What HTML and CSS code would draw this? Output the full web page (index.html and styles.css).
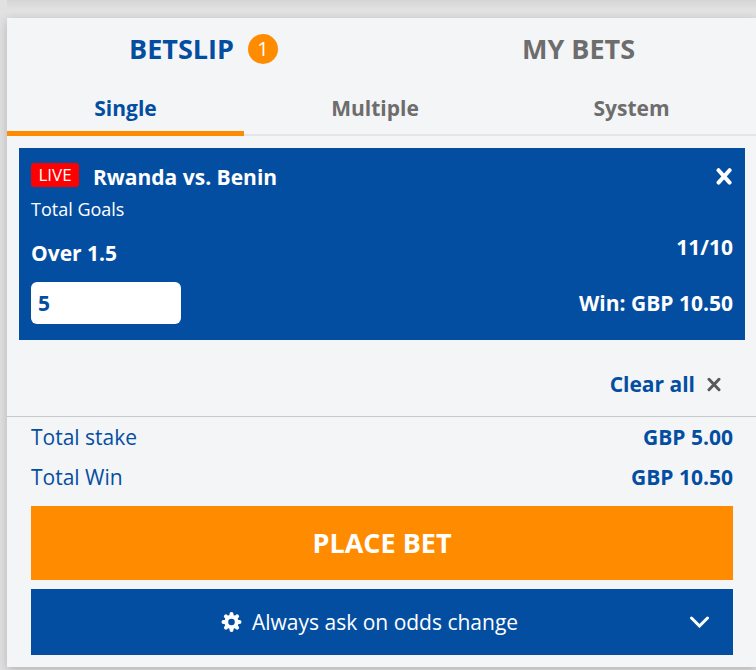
FILE: index.html
```html
<!DOCTYPE html>
<html lang="en">
<head>
    <meta charset="UTF-8">
    <title>Betslip</title>
    <link rel="stylesheet" href="styles.css">
</head>
<body>
    <div class="top-panel"></div>
    <div class="betslip">
        <div class="main-tabs">
            <div class="main-tab selected"><span class="label">BETSLIP</span><span class="count">1</span></div>
            <div class="main-tab"><span class="label">MY BETS</span></div>
        </div>

        <ul class="type-tabs">
            <li class="selected">Single</li>
            <li>Multiple</li>
            <li>System</li>
        </ul>

        <div class="bet">
            <div class="bet-head">
                <span class="live">LIVE</span>
                <span class="match">Rwanda vs. Benin</span>
                <svg class="close" viewBox="0 0 16 16"><path d="M2.4 2.1L12.8 13.7M12.8 2.1L2.4 13.7"/></svg>
            </div>
            <div class="market">Total Goals</div>
            <div class="bet-row">
                <span class="pick">Over 1.5</span>
                <span class="odds">11/10</span>
            </div>
            <div class="bet-row stake-row">
                <input class="stake" type="text" value="5">
                <span class="win">Win: GBP 10.50</span>
            </div>
        </div>

        <div class="clear">
            <span>Clear all</span>
            <svg class="clear-icon" viewBox="0 0 14 14"><path d="M2 1.8L12 12.2M12 1.8L2 12.2"/></svg>
        </div>

        <div class="totals">
            <div class="total"><span>Total stake</span><b>GBP 5.00</b></div>
            <div class="total"><span>Total Win</span><b>GBP 10.50</b></div>
        </div>

        <div class="place">PLACE BET</div>
        <div class="settings">
            <svg class="gear" viewBox="0 0 20 20">
                <g class="teeth">
                    <path d="M10 2V18M2 10H18"/>
                    <path d="M4.4 4.4L15.6 15.6M15.6 4.4L4.4 15.6"/>
                </g>
                <circle class="wheel" cx="10" cy="10" r="7.2"/>
                <circle class="hole" cx="10" cy="10" r="3.3"/>
            </svg>
            <span>Always ask on odds change</span>
            <svg class="arrow" viewBox="0 0 20 12"><path d="M2.5 2L10.5 10L18.5 2"/></svg>
        </div>
    </div>
</body>
</html>
```
FILE: styles.css
```css
*{
    margin: 0;
    padding: 0;
    box-sizing: border-box;
}
body{
    background: #e1e1e1;
    font-family: "Open Sans", sans-serif;
    font-size: 21px;
    color: #044ea2;
    height: 670px;
    overflow: hidden;
}
ul li{
    list-style: none;
}
.top-panel{
    height: 18px;
    margin-left: 7px;
    background: linear-gradient(#d5d5d5, #e2e2e2 10px, #e0e0e0);
}
.betslip{
    width: 750px;
    height: 649px;
    margin-left: 7px;
    background: #f4f5f7;
    box-shadow: 0 3px 10px rgba(0,0,0,0.2);
}
.main-tabs{
    display: flex;
    height: 62px;
}
.main-tab{
    display: flex;
    width: 393px;
    justify-content: center;
    align-items: center;
    font-size: 27px;
    font-weight: 700;
    color: #6d6d6d;
}
.main-tab + .main-tab{
    width: 357px;
}
.main-tab.selected{
    color: #044ea2;
}
.label{
    padding-bottom: 2px;
}
.count{
    width: 30px;
    height: 30px;
    margin-left: 14px;
    border-radius: 50%;
    background: #ff8c00;
    color: white;
    font-size: 20px;
    font-weight: 500;
    line-height: 30px;
    text-align: center;
}
.type-tabs{
    display: flex;
    height: 56px;
    font-weight: 700;
    line-height: 56px;
    text-align: center;
    color: #6d6d6d;
}
.type-tabs li{
    border-bottom: 2px solid #e4e5e7;
}
.type-tabs li:first-child{
    width: 237px;
}
.type-tabs li:nth-child(2){
    width: 262px;
}
.type-tabs li:last-child{
    width: 251px;
}
.type-tabs .selected{
    color: #044ea2;
    border-bottom: 5px solid #ff8c00;
}
.bet{
    width: 726px;
    height: 192px;
    margin: 12px 12px 0;
    padding: 14px 12px 0;
    background: #044ea2;
    color: white;
}
.bet-head{
    display: flex;
    height: 30px;
    align-items: center;
}
.live{
    width: 48px;
    height: 24px;
    margin-bottom: 4px;
    border-radius: 3px;
    background: #ff0000;
    font-size: 17px;
    font-weight: 500;
    line-height: 23px;
    text-align: center;
}
.match{
    margin-left: 14px;
    font-weight: 700;
}
.close{
    width: 17px;
    height: 17px;
    margin-left: auto;
    margin-bottom: 2px;
    fill: none;
    stroke: white;
    stroke-width: 3.8;
    stroke-linecap: round;
}
.market{
    font-size: 18px;
    line-height: 34px;
}
.bet-row{
    display: flex;
    justify-content: space-between;
    font-weight: 700;
}
.pick{
    padding-top: 7px;
    line-height: 40px;
}
.odds{
    line-height: 42px;
}
.stake-row{
    align-items: center;
    margin-top: 9px;
}
.stake{
    width: 150px;
    height: 42px;
    padding: 0 7px;
    border: 0;
    border-radius: 6px;
    background: white;
    color: #044ea2;
    font: 700 21px "Open Sans", sans-serif;
}
.clear{
    display: flex;
    height: 77px;
    padding: 12px 36px 0 0;
    justify-content: flex-end;
    align-items: center;
    border-bottom: 1px solid #c8c9cb;
    font-weight: 700;
}
.clear-icon{
    width: 14px;
    height: 15px;
    margin-left: 12px;
    fill: none;
    stroke: #5a5a5a;
    stroke-width: 3;
    stroke-linecap: round;
}
.totals{
    padding: 0 24px;
}
.total{
    display: flex;
    height: 40px;
    justify-content: space-between;
    line-height: 40px;
}
.place{
    height: 74px;
    margin: 9px 24px 0;
    background: #ff8c00;
    color: white;
    font-size: 27px;
    font-weight: 700;
    line-height: 74px;
    text-align: center;
}
.settings{
    display: flex;
    height: 66px;
    margin: 9px 24px 0;
    padding: 0 24px 0 190px;
    align-items: center;
    background: #044ea2;
    color: white;
}
.gear{
    width: 21px;
    height: 20px;
    margin-right: 10px;
}
.teeth{
    fill: none;
    stroke: white;
    stroke-width: 4;
    stroke-linecap: round;
}
.wheel{
    fill: white;
}
.hole{
    fill: #044ea2;
}
.arrow{
    width: 20px;
    height: 12px;
    margin-left: auto;
    fill: none;
    stroke: white;
    stroke-width: 3;
    stroke-linecap: round;
}
```
